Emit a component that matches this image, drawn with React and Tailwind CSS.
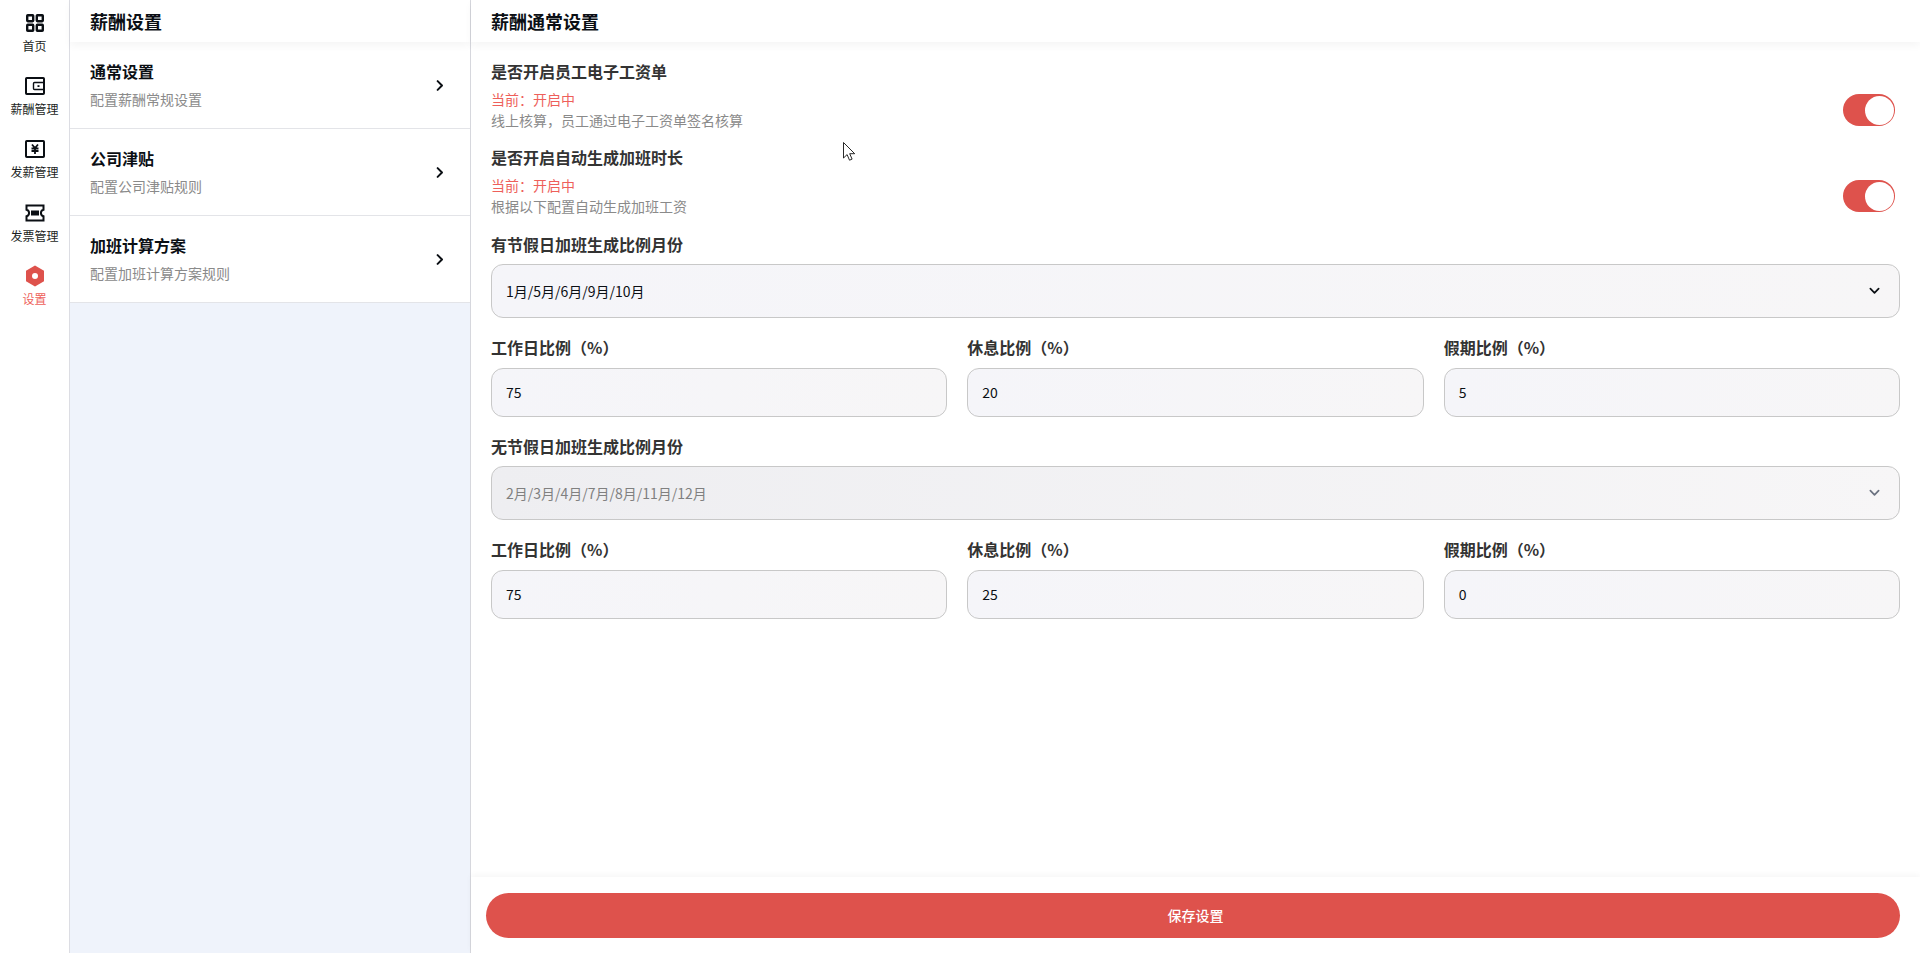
import React from "react";

const Chevron = ({ cls }) => (
  <svg viewBox="0 0 24 24" className={cls} fill="none" stroke="currentColor" strokeWidth="3.2" strokeLinecap="round" strokeLinejoin="round">
    <path d="M9 5l7 7-7 7" />
  </svg>
);
const Down = ({ cls }) => (
  <svg viewBox="0 0 12 8" className={cls} fill="none" stroke="currentColor" strokeWidth="1.9" strokeLinecap="round" strokeLinejoin="round">
    <path d="M1.5 1.5L6 6l4.5-4.5" />
  </svg>
);

const icons = {
  home: (
    <svg viewBox="0 0 20 20" className="w-5 h-5" fill="none" stroke="#0b0f14" strokeWidth="2.4">
      <rect x="2.2" y="2.2" width="6" height="6" rx="0.6" />
      <rect x="11.8" y="2.2" width="6" height="6" rx="0.6" />
      <rect x="2.2" y="11.8" width="6" height="6" rx="0.6" />
      <rect x="11.8" y="11.8" width="6" height="6" rx="0.6" />
    </svg>
  ),
  wallet: (
    <svg viewBox="0 0 20 20" className="w-5 h-5" fill="none" stroke="#0b0f14" strokeWidth="2">
      <rect x="1" y="2" width="18" height="16" rx="0.8" />
      <path d="M18.5 6.5H9.5a1 1 0 0 0-1 1v5a1 1 0 0 0 1 1h9" strokeWidth="1.4" />
      <rect x="12.5" y="9.2" width="2" height="1.8" fill="#0b0f14" stroke="none" />
    </svg>
  ),
  pay: (
    <svg viewBox="0 0 20 20" className="w-5 h-5" fill="none" stroke="#0b0f14" strokeWidth="2">
      <rect x="1" y="2" width="18" height="16" rx="0.8" />
      <path d="M7 5.5l3 3.5 3-3.5M6.5 9.5h7M6.5 12h7M10 9v6" strokeWidth="1.8" />
    </svg>
  ),
  ticket: (
    <svg viewBox="0 0 20 20" className="w-5 h-5" fill="none" stroke="#0b0f14" strokeWidth="2">
      <path d="M1.5 2.5h17v4.2a3.4 3.4 0 0 0 0 6.6v4.2h-17v-4.2a3.4 3.4 0 0 0 0-6.6z" />
      <rect x="6" y="7.5" width="8" height="5" fill="#0b0f14" stroke="none" />
    </svg>
  ),
  gear: (
    <svg viewBox="0 0 20 20" className="w-5 h-5 overflow-visible">
      <path d="M10 -0.4l9 5.2v10.4l-9 5.2-9-5.2V4.8z" fill="#de524c" />
      <circle cx="10" cy="10" r="3" fill="#fff" />
    </svg>
  ),
};

const nav = [
  ["home", "首页"],
  ["wallet", "薪酬管理"],
  ["pay", "发薪管理"],
  ["ticket", "发票管理"],
  ["gear", "设置", true],
];

const items = [
  ["通常设置", "配置薪酬常规设置"],
  ["公司津贴", "配置公司津贴规则"],
  ["加班计算方案", "配置加班计算方案规则"],
];

const Toggle = () => (
  <div className="w-[52px] h-[32px] mt-[35px] rounded-full bg-[#de524c] flex items-center justify-end pr-[1px] shrink-0">
    <div className="w-[29px] h-[29px] rounded-full bg-white" />
  </div>
);

const Setting = ({ title, desc }) => (
  <div className="flex items-start justify-between pr-[5px] h-[86px]">
    <div>
      <div className="text-[16px] leading-[24px] font-bold text-[#333333]">{title}</div>
      <div className="text-[14px] leading-[20px] text-[#ee5f5b] mt-[6px]">{"当前\uFF1A开启中"}</div>
      <div className="text-[14px] leading-[20px] text-[#8a8a8a] mt-[1px]">{desc}</div>
    </div>
    <Toggle />
  </div>
);

const Label = ({ children }) => (
  <div className="text-[16px] leading-[24px] font-bold text-[#333333]">{children}</div>
);

const Select = ({ value, disabled }) => (
  <div
    className={
      "mt-[8px] h-[54px] rounded-[12px] border border-[#c8c8c8] flex items-center justify-between pl-[14px] pr-[19px] text-[14px] to-[#f7f6f7] bg-gradient-to-r " +
      (disabled ? "from-[#eeeef1] text-[#808080]" : "from-[#f5f5f9] text-[#0b0f14]")
    }
  >
    <span>{value}</span>
    <Down cls={"w-[11px] h-[8px] " + (disabled ? "text-[#6b7280]" : "text-[#0b0f14]")} />
  </div>
);

const ratioLabels = ["工作日比例\uFF08%\uFF09", "休息比例\uFF08%\uFF09", "假期比例\uFF08%\uFF09"];

const Ratio = ({ values }) => (
  <div className="grid grid-cols-3 gap-5 mt-[17px]">
    {values.map((v, i) => (
      <div key={i}>
        <Label>{ratioLabels[i]}</Label>
        <div className="mt-[9px] h-[49px] rounded-[12px] border border-[#c8c8c8] flex items-center pl-[14px] text-[14px] text-[#0b0f14] bg-gradient-to-r from-[#f5f5f9] to-[#f7f6f7]">
          {v}
        </div>
      </div>
    ))}
  </div>
);

export default function App() {
  return (
    <div className="relative flex h-[953px] w-[1920px] overflow-hidden bg-white font-['Noto_Sans_CJK_SC','Noto_Sans',sans-serif]">
      <aside className="w-[70px] shrink-0 border-r border-[#dcdde3] bg-white">
        {nav.map(([icon, label, active], i) => (
          <div key={i} className="h-[63.2px] flex flex-col items-center pt-[13px]">
            {icons[icon]}
            <span className={"text-[12px] leading-[18px] mt-[4px] " + (active ? "text-[#ee5f5b]" : "text-[#1c1f24]")}>{label}</span>
          </div>
        ))}
      </aside>

      <section className="w-[401px] shrink-0 border-r border-[#d6d7dd] bg-[#eff3fb] flex flex-col">
        <div className="h-[42px] bg-white pl-5 flex items-center text-[18px] font-bold text-[#0b0f14] shadow-[0_4px_8px_rgba(0,0,0,0.04)] relative z-10">
          薪酬设置
        </div>
        {items.map(([t, d], i) => (
          <div key={i} className="h-[87px] bg-white border-b border-[#e3e4e8] pl-5 pr-[23px] flex items-center justify-between">
            <div className="pb-[3px]">
              <div className="text-[16px] leading-[24px] font-bold text-[#0b0f14]">{t}</div>
              <div className="text-[14px] leading-[20px] text-[#8a8a8a] mt-[6px]">{d}</div>
            </div>
            <Chevron cls="w-[15px] h-[15px] text-[#0b0f14]" />
          </div>
        ))}
      </section>

      <main className="flex-1 flex flex-col bg-white min-w-0">
        <div className="h-[42px] shrink-0 bg-white pl-5 flex items-center text-[18px] font-bold text-[#0b0f14] shadow-[0_4px_8px_rgba(0,0,0,0.04)] relative z-10">
          薪酬通常设置
        </div>
        <div className="flex-1 pl-5 pr-5 pt-[17px]">
          <Setting title="是否开启员工电子工资单" desc={"线上核算\uFF0C员工通过电子工资单签名核算"} />
          <Setting title="是否开启自动生成加班时长" desc="根据以下配置自动生成加班工资" />
          <div className="mt-[1px]">
            <Label>有节假日加班生成比例月份</Label>
            <Select value="1月/5月/6月/9月/10月" />
          </div>
          <Ratio values={["75", "20", "5"]} />
          <div className="mt-[17px]">
            <Label>无节假日加班生成比例月份</Label>
            <Select value="2月/3月/4月/7月/8月/11月/12月" disabled />
          </div>
          <Ratio values={["75", "25", "0"]} />
        </div>
        <div className="h-[76px] shrink-0 bg-white shadow-[0_-2px_6px_rgba(0,0,0,0.04)] pl-[15px] pr-5 pt-[16px]">
          <div className="h-[45px] rounded-full bg-[#de524c] flex items-center justify-center pl-[5px] text-[14px] font-medium text-white">
            保存设置
          </div>
        </div>
      </main>

      <svg viewBox="0 0 13 20" className="absolute left-[843px] top-[142px] w-[13px] h-[20px]">
        <path d="M0.5 0.5v15.5l3.6-3.4 2.4 5.6 2.6-1.1-2.4-5.4h5z" fill="#fff" stroke="#111" strokeWidth="0.9" strokeLinejoin="round" />
      </svg>
    </div>
  );
}
